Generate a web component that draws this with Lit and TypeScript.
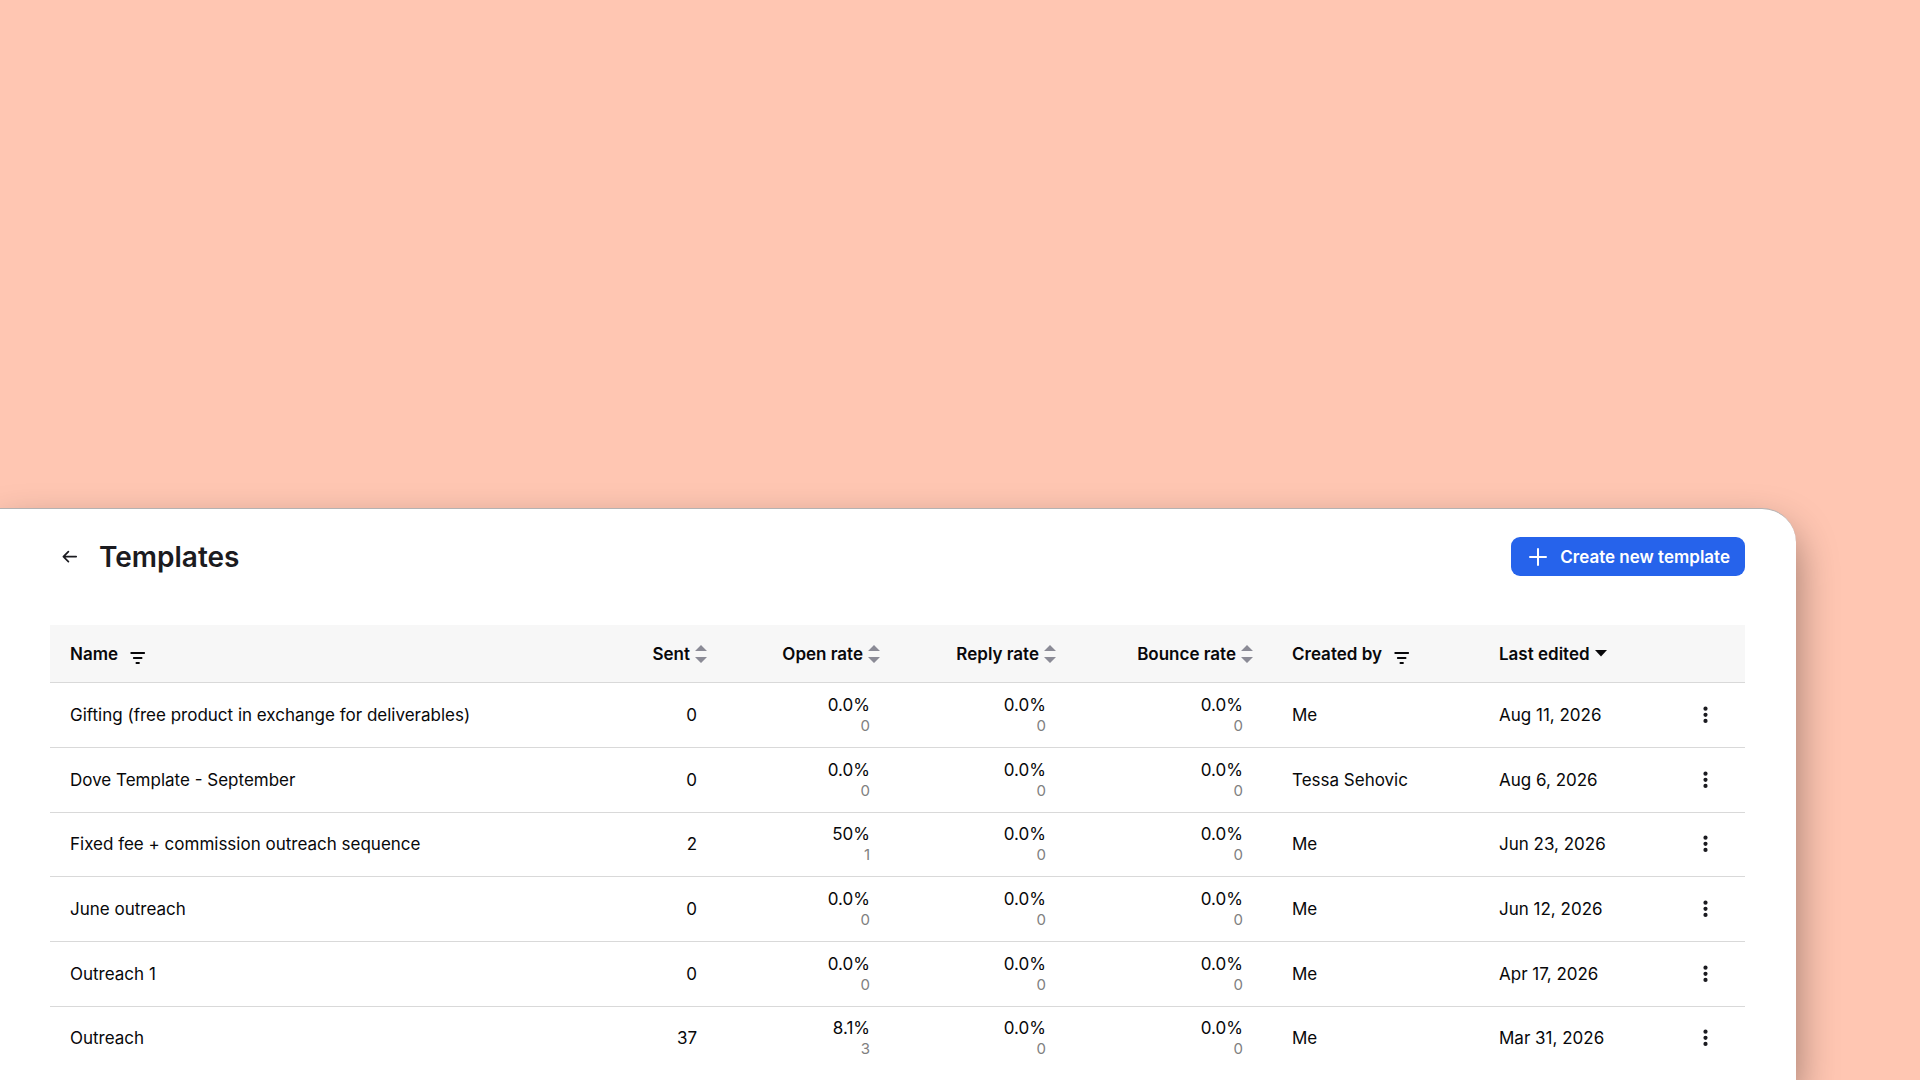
import { LitElement, html, css, svg } from "lit";
import { customElement, property, state } from "lit/decorators.js";

interface Rate {
  rate: string;
  count: number;
}

interface Template {
  name: string;
  sent: number;
  open: Rate;
  reply: Rate;
  bounce: Rate;
  author: string;
  edited: string;
}

const none: Rate = { rate: "0.0%", count: 0 };

const templates: Template[] = [
  { name: "Gifting (free product in exchange for deliverables)", sent: 0, open: none, reply: none, bounce: none, author: "Me", edited: "Aug 11, 2026" },
  { name: "Dove Template - September", sent: 0, open: none, reply: none, bounce: none, author: "Tessa Sehovic", edited: "Aug 6, 2026" },
  { name: "Fixed fee + commission outreach sequence", sent: 2, open: { rate: "50%", count: 1 }, reply: none, bounce: none, author: "Me", edited: "Jun 23, 2026" },
  { name: "June outreach", sent: 0, open: none, reply: none, bounce: none, author: "Me", edited: "Jun 12, 2026" },
  { name: "Outreach 1", sent: 0, open: none, reply: none, bounce: none, author: "Me", edited: "Apr 17, 2026" },
  { name: "Outreach", sent: 37, open: { rate: "8.1%", count: 3 }, reply: none, bounce: none, author: "Me", edited: "Mar 31, 2026" },
];

const icons = {
  back: svg`<svg width="16" height="16" viewBox="0 0 16 16" fill="none" stroke="currentColor" stroke-width="1.7" stroke-linecap="round" stroke-linejoin="round"><path d="M14.2 7.6H1.4M6.4 2.6L1.4 7.6L6.4 12.6"/></svg>`,
  plus: svg`<svg width="18" height="18" viewBox="0 0 18 18" fill="none" stroke="currentColor" stroke-width="2" stroke-linecap="round"><path d="M9 1V17M1 9H17"/></svg>`,
  filter: svg`<svg width="16" height="14" viewBox="0 0 16 14" fill="none" stroke="currentColor" stroke-width="1.8" stroke-linecap="round"><path d="M1.2 2H14.2M3.8 7H11.6M6.4 12H9"/></svg>`,
  sort: svg`<svg width="12" height="18" viewBox="0 0 12 18" fill="currentColor"><path d="M6 0L12 6H0ZM0 12H12L6 18Z"/></svg>`,
  sorted: svg`<svg width="12" height="7" viewBox="0 0 12 7" fill="currentColor"><path d="M0 0H12L6 6.6Z"/></svg>`,
  more: svg`<svg width="5" height="18" viewBox="0 0 5 18" fill="currentColor"><circle cx="2.5" cy="2.7" r="2.1"/><circle cx="2.5" cy="8.8" r="2.1"/><circle cx="2.5" cy="14.9" r="2.1"/></svg>`,
};

@customElement("template-table")
class TemplateTable extends LitElement {
  @property({ attribute: false }) rows: Template[] = [];

  static styles = css`
    :host {
      display: grid;
    }
    .table {
      width: 100%;
      table-layout: fixed;
      border-collapse: separate;
      border-spacing: 0;
      font-size: 17px;
      line-height: 24px;
      color: #08080a;
    }
    .sent { width: 176px; }
    .open { width: 173px; }
    .reply { width: 176px; }
    .bounce { width: 197px; }
    .author { width: 207px; }
    .edited { width: 187px; }
    .menu { width: 79px; }
    .head {
      height: 58px;
      background: #f7f7f7;
    }
    th, td {
      box-sizing: border-box;
      padding: 0 0 0 20px;
      text-align: left;
      white-space: nowrap;
      vertical-align: middle;
      font-weight: 400;
      border-bottom: 1px solid #d9d9d9;
    }
    .row:last-child td {
      border-bottom: 0;
    }
    th.num {
      padding: 0 19px 0 0;
    }
    td.num {
      padding: 0 29px 0 0;
      text-align: right;
    }
    .label {
      display: flex;
      align-items: center;
    }
    .num .label {
      justify-content: flex-end;
    }
    .tool {
      display: inline-flex;
      align-items: center;
      gap: 5px;
      margin: 0;
      padding: 0;
      border: 0;
      background: none;
      font: inherit;
      font-weight: 600;
      color: inherit;
      cursor: pointer;
    }
    .title {
      font-weight: 600;
    }
    .filter {
      margin-left: 12px;
      padding-top: 8px;
    }
    .muted {
      color: #8b8b96;
    }
    svg {
      display: block;
    }
    .rate {
      display: block;
      line-height: 22px;
    }
    .count {
      display: block;
      font-size: 15px;
      line-height: 20px;
      color: #808080;
    }
    td.actions, th.actions {
      padding: 0;
    }
    .more {
      display: flex;
      justify-content: center;
      width: 100%;
      padding: 8px 0;
      border: 0;
      background: none;
      color: #1b1b20;
      cursor: pointer;
    }
  `;

  private sortable(label: string, cls: string) {
    return html`<th class="num ${cls}" scope="col" aria-sort="none">
      <div class="label">
        <button class="tool" type="button">${label}<span class="muted">${icons.sort}</span></button>
      </div>
    </th>`;
  }

  private filterable(label: string, cls: string) {
    return html`<th class=${cls} scope="col">
      <div class="label">
        <span class="title">${label}</span>
        <button class="tool filter" type="button" aria-label="Filter by ${label}">${icons.filter}</button>
      </div>
    </th>`;
  }

  private rate(value: Rate) {
    return html`<td class="num"><span class="rate">${value.rate}</span><span class="count">${value.count}</span></td>`;
  }

  render() {
    return html`
      <table class="table" aria-label="Templates">
        <thead>
          <tr class="head">
            ${this.filterable("Name", "name")}
            ${this.sortable("Sent", "sent")}
            ${this.sortable("Open rate", "open")}
            ${this.sortable("Reply rate", "reply")}
            ${this.sortable("Bounce rate", "bounce")}
            ${this.filterable("Created by", "author")}
            <th class="edited" scope="col" aria-sort="descending">
              <div class="label">
                <button class="tool" type="button">Last edited${icons.sorted}</button>
              </div>
            </th>
            <th class="menu actions" scope="col" aria-label="Actions"></th>
          </tr>
        </thead>
        <tbody>
          ${this.rows.map(
            (t) => html`<tr class="row">
              <td>${t.name}</td>
              <td class="num">${t.sent}</td>
              ${this.rate(t.open)}${this.rate(t.reply)}${this.rate(t.bounce)}
              <td>${t.author}</td>
              <td>${t.edited}</td>
              <td class="actions">
                <button class="more" type="button" aria-label="Actions for ${t.name}">${icons.more}</button>
              </td>
            </tr>`,
          )}
        </tbody>
      </table>
    `;
  }
}

@customElement("app-root")
class AppRoot extends LitElement {
  @state() private rows = templates;

  static styles = css`
    :host {
      display: flex;
      flex-direction: column;
      box-sizing: border-box;
      height: 100vh;
      padding: 508px 124px 0 0;
      overflow: hidden;
      background: #ffc6b2;
      font-family: Inter, "Liberation Sans", sans-serif;
    }
    .card {
      flex: 1 0 auto;
      display: flex;
      flex-direction: column;
      gap: 40px;
      padding: 19px 51px 10px 50px;
      border-top: 1px solid #b4b2b2;
      border-top-right-radius: 34px;
      background: #fff;
      box-shadow: 0 20px 40px rgba(0, 0, 0, 0.4);
    }
    .bar {
      display: flex;
      align-items: center;
      justify-content: space-between;
      min-height: 57px;
    }
    .heading {
      display: flex;
      align-items: center;
      gap: 21px;
    }
    .back {
      display: flex;
      margin-left: 12px;
      color: #1b1b20;
    }
    .title {
      margin: 0;
      font-size: 28px;
      line-height: 40px;
      font-weight: 600;
      color: #1b1b20;
    }
    .create {
      display: flex;
      align-items: center;
      gap: 13px;
      padding: 0 15px 0 18px;
      height: 39px;
      border: 0;
      border-radius: 9px;
      background: #2663eb;
      color: #fff;
      font: inherit;
      font-size: 17px;
      font-weight: 600;
      cursor: pointer;
    }
    .list {
      flex: 1;
    }
    svg {
      display: block;
    }
  `;

  render() {
    return html`
      <main class="card">
        <header class="bar">
          <div class="heading">
            <a class="back" href="#" aria-label="Back">${icons.back}</a>
            <h1 class="title">Templates</h1>
          </div>
          <button class="create" type="button">${icons.plus}<span>Create new template</span></button>
        </header>
        <template-table class="list" .rows=${this.rows}></template-table>
      </main>
    `;
  }
}
